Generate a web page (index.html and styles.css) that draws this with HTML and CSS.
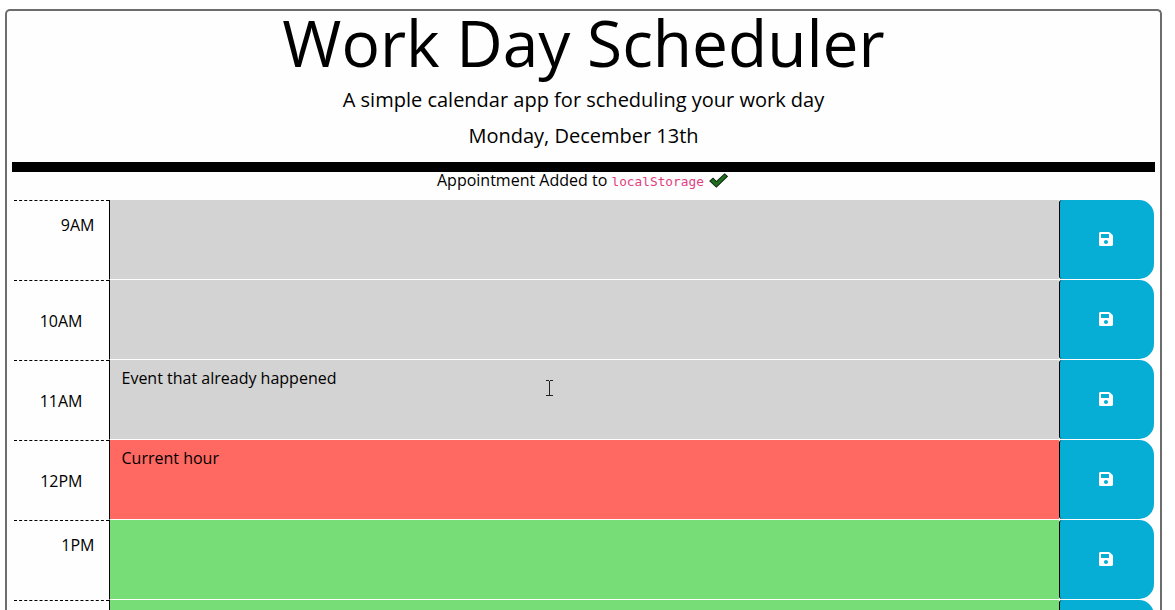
FILE: index.html
```html
<!DOCTYPE html>
<html lang="en">
<head>
<meta charset="utf-8">
<title>Work Day Scheduler</title>
<link rel="stylesheet" href="styles.css">
</head>
<body>
<svg class="defs" width="0" height="0"><symbol id="save" viewBox="0 0 448 512"><path d="M433.941 129.941l-83.882-83.882A48 48 0 0 0 316.118 32H48C21.49 32 0 53.49 0 80v352c0 26.51 21.49 48 48 48h352c26.51 0 48-21.49 48-48V163.882a48 48 0 0 0-14.059-33.941zM224 416c-35.346 0-64-28.654-64-64 0-35.346 28.654-64 64-64s64 28.654 64 64c0 35.346-28.654 64-64 64zm96-304.52V212c0 6.627-5.373 12-12 12H76c-6.627 0-12-5.373-12-12V108c0-6.627 5.373-12 12-12h228.52c3.183 0 6.235 1.264 8.485 3.515l3.48 3.48A11.996 11.996 0 0 1 320 111.48z"/></symbol></svg>
<div class="page">
<header class="jumbotron">
<h1>Work Day Scheduler</h1>
<p class="lead">A simple calendar app for scheduling your work day</p>
<p class="lead date">Monday, December 13th</p>
</header>
<p class="notice">Appointment Added to <code>localStorage</code> <svg class="check" viewBox="0 0 18 14"><path d="M.8 7.500L3.800 4.800l3.200 3.200L14.800.8l2.500 2.300L7 13.200z"/></svg></p>
<main>
<div class="row"><div class="hour early">9AM</div><div class="task past"></div><button class="save"><svg><use href="#save"/></svg></button></div>
<div class="row"><div class="hour">10AM</div><div class="task past"></div><button class="save"><svg><use href="#save"/></svg></button></div>
<div class="row"><div class="hour">11AM</div><div class="task past">Event that already happened</div><button class="save"><svg><use href="#save"/></svg></button></div>
<div class="row"><div class="hour">12PM</div><div class="task present">Current hour</div><button class="save"><svg><use href="#save"/></svg></button></div>
<div class="row"><div class="hour early">1PM</div><div class="task future"></div><button class="save"><svg><use href="#save"/></svg></button></div>
<div class="row"><div class="hour early"></div><div class="task future"></div><button class="save"><svg><use href="#save"/></svg></button></div>
</main>
</div>
<svg class="cursor" viewBox="0 0 9 17"><path d="M1 .5h3m1 0h3M4.500 1v15M1 15.500h3m1 0h3"/></svg>
</body>
</html>
```

FILE: styles.css
```css
* { box-sizing: border-box; }
body { margin: 0; height: 610px; overflow: hidden; background: #fff; color: #000; font: 16px/24px "Open Sans", sans-serif; position: relative; }
.defs { position: absolute; }
.page { margin: 9px 13px 0 5px; height: 601px; border: 2px solid #6d6d6f; border-bottom: 0; border-radius: 5px 5px 0 0; padding: 0 5px; background: #fefefe; }
.jumbotron { height: 161px; border-bottom: 10px solid #000; text-align: center; }
h1 { margin: 0; font-size: 64px; font-weight: 400; line-height: 64px; }
.lead { margin: 10px 0 0; font-size: 20px; line-height: 30px; }
.date { margin-top: 6px; }
.notice { margin: 0; padding-right: 2px; height: 28px; line-height: 17px; text-align: center; }
code { font: 12.8px "DejaVu Sans Mono", monospace; line-height: 1; color: #e0407f; }
.check { width: 19px; height: 15px; margin-left: 1px; fill: #1e6e1e; stroke: #102510; vertical-align: -2px; }
main { height: 410px; overflow: hidden; padding: 0 1px 0 2px; }
.row { display: grid; grid-template-columns: 95px 950px 95px; height: 80px; }
.hour { border-top: 1px dashed #000; padding: 28px 26.500px 0 0; text-align: right; }
.early { padding: 12px 14.500px 0 0; }
.task { border-left: 1px solid #000; border-bottom: 1px solid #fff; padding: 6px 11.500px; }
.past { background: #d3d3d3; }
.present { background: #ff6961; }
.future { background: #77dd77; }
.save { height: 79px; border: 0; border-left: 1px solid #000; border-radius: 3px 15px 15px 3px; background: #06aed5; color: #fff; display: flex; align-items: center; justify-content: center; padding: 0 2px 1px 0; }
.save svg { width: 14px; height: 16px; fill: #fff; }
.cursor { position: absolute; left: 545px; top: 380px; width: 9px; height: 17px; fill: none; stroke: #222; }
```
